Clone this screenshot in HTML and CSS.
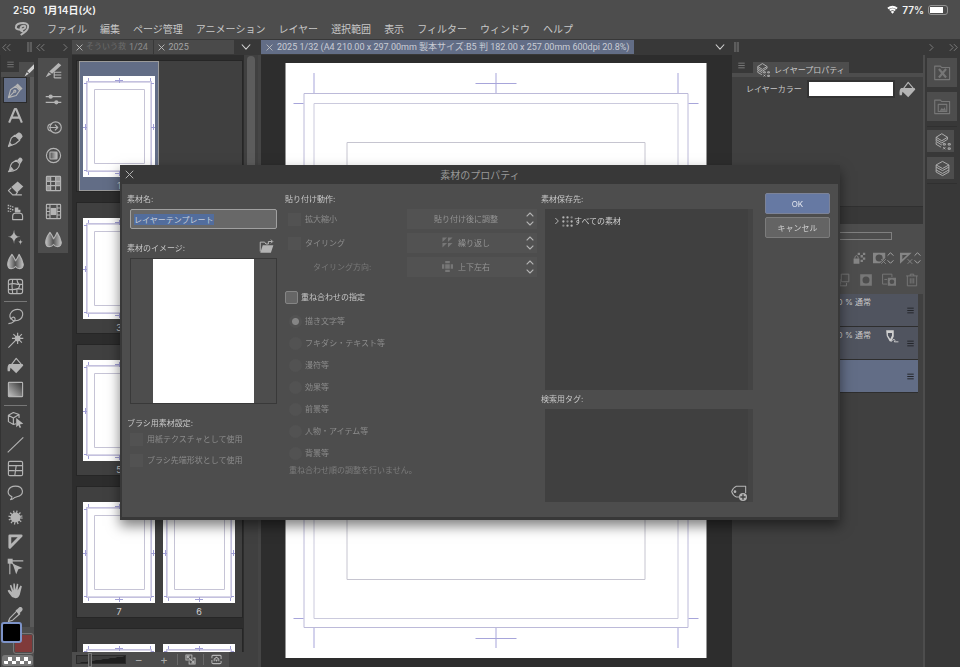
FILE: index.html
```html
<!DOCTYPE html>
<html lang="ja">
<head>
<meta charset="utf-8">
<meta name="viewport" content="width=device-width, initial-scale=1">
<title>素材のプロパティ</title>
<link rel="stylesheet" href="styles.css">
</head>
<body>
<svg class="sprite" aria-hidden="true">
  <defs>
    <linearGradient id="fade" x1="0" y1="0" x2="1" y2="0"><stop offset="0" stop-color="#c4c4c4"/><stop offset="1" stop-color="#505050"/></linearGradient>
    <linearGradient id="fadeback" x1="0" y1="0" x2="1" y2="0"><stop offset="0" stop-color="#505050"/><stop offset="1" stop-color="#c4c4c4"/></linearGradient>
    <linearGradient id="fadediag" x1="0" y1="1" x2="1" y2="0"><stop offset="0" stop-color="#c4c4c4"/><stop offset="1" stop-color="#333"/></linearGradient>
  </defs>
  <symbol id="i-logo" viewBox="0 0 24 24"><path class="ln thick" d="M9 13c-5 0-7-2-6-5 1-4 6-5 11-5 6 0 8 3 7 7-1 5-6 8-11 11M9 13c4 0 8-2 8-4 0-3-6-2-7 1-1 4 1 6 4 5"/></symbol>
  <symbol id="i-pen" viewBox="0 0 24 24"><path class="ln" d="M2 22 5 11l7-5 6 6-5 7zM2 22l8-8"/><circle class="ln" cx="11" cy="13" r="1.500"/><path class="fl" d="m12 5 3-3 7 7-3 3z"/></symbol>
  <symbol id="i-text" viewBox="0 0 24 24"><path class="ln thick" d="M3 22 11 3h2l8 19M6 15h12"/></symbol>
  <symbol id="i-pencil" viewBox="0 0 24 24"><path class="ln" d="M2 22 6 10l5-4 7 7-6 5z"/><path class="fl" d="m2 22 2-6 4 4zM11 6l5-4c3 0 6 3 6 6l-4 5z"/></symbol>
  <symbol id="i-brush" viewBox="0 0 24 24"><path class="ln" d="M2 22c4-3 1-8 5-12l6-4 5 5c-1 9-8 11-16 11z"/><path class="fl" d="m14 6 4-4c3 0 4 2 4 4l-3 5zM2 22l4-7 4 5z"/></symbol>
  <symbol id="i-eraser" viewBox="0 0 24 24"><path class="fl" d="m6 10 9-8 8 7-9 9z"/><path class="ln" d="m6 11-4 4 6 6h4l3-4M8 21h13"/></symbol>
  <symbol id="i-spray" viewBox="0 0 24 24"><path class="dots" d="M2 1v11M5 2v9M8 3v7"/><path class="fl" d="M11 5h5v3h3v4h-8z"/><path class="ln" d="M8 22v-5q0-4 4-4h6q4 0 4 4v5z"/></symbol>
  <symbol id="i-spark" viewBox="0 0 24 24"><path class="fl" d="M10 1q0 10 9 10-9 0-9 10-1-10-9-10 8 0 9-10zM19 14q0 4 4 4-4 0-4 5 0-5-4-5 4 0 4-4z"/></symbol>
  <symbol id="i-blend" viewBox="0 0 24 24"><path fill="url(#fade)" d="M7 2q3 4 5 9l-1 9q-2 2-5 2-5 0-5-6T7 2z"/><path fill="url(#fadeback)" d="M17 2q5 8 6 14 0 6-5 6-4 0-6-3l-1-6q3-5 6-11z"/><path class="ln" d="M7 2q3 4 5 9 3-4 5-9 5 8 6 14 0 6-5 6-4 0-6-3-2 3-6 3-5 0-5-6T7 2z"/></symbol>
  <symbol id="i-warp" viewBox="0 0 24 24"><rect class="ln" x="2" y="2" width="20" height="20" rx="3"/><path class="ln" d="M8 2q-2 10 0 20M2 9q8-2 13 0h7M2 16q8 1 13-1l7 1M14 2q0 4 4 8-1 5-4 6v6"/></symbol>
  <symbol id="i-lasso" viewBox="0 0 24 24"><path class="ln" d="M6 16C1 10 7 2 15 2c11 0 9 15-3 16-5 1-7-4-4-5s5 3 2 6-6 3-8 3"/></symbol>
  <symbol id="i-wand" viewBox="0 0 24 24"><path class="ln" d="m2 22 9-9M15 1v16M7 9h16M9 3l12 12M21 3 9 15"/><circle class="fl" cx="15" cy="9" r="4"/></symbol>
  <symbol id="i-bucket" viewBox="0 0 24 24"><path class="ln" d="M6 11 13 2l7 8"/><path class="fl" d="M3 10h19l1 2-10 11-8-8-1 5H1q-1-8 2-10z"/></symbol>
  <symbol id="i-gradient" viewBox="0 0 24 24"><rect class="ln" x="2" y="2" width="20" height="20" rx="1" style="fill:url(#fadediag)"/></symbol>
  <symbol id="i-object" viewBox="0 0 24 24"><path class="ln" d="m9 2 8 3v5M9 2 2 6v9l7 4 4-1M2 6l7 4 8-5M9 10v9"/><path class="fl" d="m13 10 10 8-5 1 2 4-2 1-2-4-3 3z"/></symbol>
  <symbol id="i-line" viewBox="0 0 24 24"><path class="ln" d="M1 23 23 2"/></symbol>
  <symbol id="i-frame" viewBox="0 0 24 24"><rect class="ln" x="2" y="2" width="20" height="20" rx="2"/><path class="ln" d="M2 8h20M2 15h9M13 8l-2 14M12 15h10"/></symbol>
  <symbol id="i-balloon" viewBox="0 0 24 24"><path class="ln" d="M7 18C-2 14 1 3 12 3s14 12 2 15l-3 1q-3 3-6 3 2-2 2-4z"/></symbol>
  <symbol id="i-burst" viewBox="0 0 24 24"><circle class="fl" cx="12" cy="12" r="7"/><circle class="ln" cx="12" cy="12" r="8" stroke-dasharray="1.600 2.600" style="stroke-width:4"/></symbol>
  <symbol id="i-ruler" viewBox="0 0 24 24"><path class="ln heavy" d="M4 4h16L4 20z"/></symbol>
  <symbol id="i-node" viewBox="0 0 24 24"><path class="ln" d="M4 4h19M4 4v19M4 4l9 9"/><rect class="fl" x="1" y="1" width="7" height="7"/><path class="fl" d="m8 8 14 6-6 2-3 7z"/></symbol>
  <symbol id="i-hand" viewBox="0 0 24 24"><path class="fl" d="M7 21C5 18 1 14 1 12l2-1 4 3L4 5l2-1 3 8V2h2l1 9 2-9 2 1-1 9 4-7 2 1-3 12q-2 5-6 5z"/></symbol>
  <symbol id="i-dropper" viewBox="0 0 24 24"><path class="ln" d="m2 22 2-5L14 7l4 4L8 20z"/><path class="fl" d="m12 6 2-1 3-3c3-2 7 2 4 5l-3 3-1 3z"/></symbol>
  <symbol id="i-stroke" viewBox="0 0 24 24"><path class="fl" d="M19 0 23 4 10 17l-4-4zM5 15l4 3-8 5z"/></symbol>
  <symbol id="i-subtool" viewBox="0 0 24 24"><path class="fl" d="M19 0 23 3 10 15l-4-3zM5 13l4 3-8 4z"/><path class="ln" d="M13 12v9M13 13h10M13 17h10M13 21h10"/></symbol>
  <symbol id="i-sliders" viewBox="0 0 24 24"><path class="ln" d="M1 8h22M1 16h22"/><circle class="fl" cx="8" cy="8" r="3"/><circle class="fl" cx="16" cy="16" r="3"/></symbol>
  <symbol id="i-size" viewBox="0 0 24 24"><circle class="ln" cx="15" cy="12" r="8"/><path class="ln" d="M9 7a5 5 0 1 0 0 10M6 12h12M14 8l4 4-4 4"/></symbol>
  <symbol id="i-color" viewBox="0 0 24 24"><circle class="ln" cx="12" cy="12" r="10"/><rect class="ln" x="7" y="7" width="10" height="10" rx="1" style="fill:url(#fadeback)"/></symbol>
  <symbol id="i-grid" viewBox="0 0 24 24"><rect class="ln" x="2" y="2" width="20" height="20" rx="1"/><path class="ln" d="M8 2v20M15 2v20M2 9h20M2 15h20"/><path class="fl" d="M2 2h6v7H2zM15 2h7v7h-7zM2 15h6v7H2zM15 9h7v6h-7z" opacity=".7"/></symbol>
  <symbol id="i-film" viewBox="0 0 24 24"><rect class="ln" x="2" y="2" width="20" height="20" rx="1"/><path class="ln" d="M7 2v20M17 2v20M2 7h5M2 12h5M2 17h5M17 7h5M17 12h5M17 17h5"/><rect class="fl" x="8" y="7" width="8" height="10"/></symbol>
  <symbol id="i-chev" viewBox="0 0 24 24"><path class="ln" d="m2 6 10 11L22 6"/></symbol>
  <symbol id="i-right" viewBox="0 0 24 24"><path class="ln" d="m7 3 9 9-9 9"/></symbol>
  <symbol id="i-dleft" viewBox="0 0 24 24"><path class="ln" d="m11 3-9 9 9 9M22 3l-9 9 9 9"/></symbol>
  <symbol id="i-dright" viewBox="0 0 24 24"><path class="ln" d="m2 3 9 9-9 9M13 3l9 9-9 9"/></symbol>
  <symbol id="i-close" viewBox="0 0 24 24"><path class="ln" d="m2 2 20 20M22 2 2 22"/></symbol>
  <symbol id="i-menu" viewBox="0 0 24 24"><path class="ln" d="M1 4h22M1 12h22M1 20h22"/></symbol>
  <symbol id="i-updown" viewBox="0 0 12 20"><path class="ln" d="m1 6 5-5 5 5M1 14l5 5 5-5"/></symbol>
  <symbol id="i-layers" viewBox="0 0 24 24"><path class="ln" d="m12 2 9 5v3l-9 5-9-5V7zM3 10v4l9 5 9-5v-4M3 14v3l9 5 9-5v-3M3 7l9 5 9-5"/></symbol>
  <symbol id="i-layerprop" viewBox="0 0 24 24"><path class="ln" d="m11 1 8 5v3l-8 5-8-5V6zM3 9v3l8 5M3 13v3l7 4M3 6l8 5 8-5"/><path class="ln" d="M13 15h3v2h-3zM20 15h3v2h-3zM13 20l3 3M16 20l-3 3M20 21h3v2h-3z"/></symbol>
  <symbol id="i-matx" viewBox="0 0 24 24"><path class="ln" d="M1 3h8l2 2h11v17H1z"/><path class="ln thick" d="m7 7 10 12M17 7 7 19"/></symbol>
  <symbol id="i-mat" viewBox="0 0 24 24"><path class="ln" d="M1 3h8l2 2h11v17H1zM6 9h12v10H6z"/><path class="fl" d="m8 18 3-4 2 2 2-3 2 5z"/></symbol>
  <symbol id="i-folder" viewBox="0 0 24 24"><path class="ln" d="M2 20V5h7l2 3h4M15 8V4h6M19 1l3 3-3 3"/><path class="fl" d="m6 10h17l-4 12H2z"/></symbol>
  <symbol id="i-alltags" viewBox="0 0 24 24"><g class="fl"><circle cx="3" cy="3" r="2.500"/><circle cx="12" cy="3" r="2.500"/><circle cx="21" cy="3" r="2.500" opacity=".6"/><circle cx="3" cy="12" r="2.500"/><circle cx="12" cy="12" r="2.500" opacity=".6"/><circle cx="21" cy="12" r="2.500"/><circle cx="3" cy="21" r="2.500" opacity=".6"/><circle cx="12" cy="21" r="2.500"/><circle cx="21" cy="21" r="2.500"/></g></symbol>
  <symbol id="i-tagadd" viewBox="0 0 24 24"><path class="ln" d="M12 18H8Q3 16 1 10 3 4 8 2h14v10"/><circle class="fl" cx="6" cy="10" r="2"/><circle class="fl" cx="18" cy="18" r="6"/><path d="M18 14v8M14 18h8" stroke="#404040" stroke-width="2"/></symbol>
  <symbol id="i-tile" viewBox="0 0 24 24"><path class="fl" d="M1 1h10L1 11zM13 1h10L13 11zM1 13h10L1 23zM13 13h10L13 23z"/></symbol>
  <symbol id="i-cross" viewBox="0 0 24 24"><path class="fl" d="M7 7h10v10H7zM7 0h10v5H7zM7 19h10v5H7zM0 7h5v10H0zM19 7h5v10h-5z"/></symbol>
  <symbol id="i-lock" viewBox="0 0 24 24"><path class="fl" d="M1 13h10v9H1zM8 3h4v4H8zM17 3h4v4h-4zM13 7h4v4h-4zM17 11h4v4h-4zM13 15h4v4h-4z"/><path class="ln" d="M3 13q0-5 3-5t3 5"/></symbol>
  <symbol id="i-maskx" viewBox="0 0 24 24"><path class="fl" fill-rule="evenodd" d="M0 3h21v9l-9 9H0zM10 6a6 6 0 1 0 1 12 6 6 0 0 0-1-12z"/><path class="ln" d="m14 14 8 8M22 14l-8 8"/></symbol>
  <symbol id="i-rulerx" viewBox="0 0 24 24"><path class="fl" fill-rule="evenodd" d="M0 3h20L0 22zM4 7v7l8-7z"/><path class="ln" d="m13 14 8 8M21 14l-8 8"/></symbol>
  <symbol id="i-merge" viewBox="0 0 24 24"><path class="ln" d="M9 2h13v13H9zM1 11h6v11h11v-5M4 14l5 4"/></symbol>
  <symbol id="i-mask" viewBox="0 0 24 24"><path class="fl" fill-rule="evenodd" d="M2 2h20v20H2zM12 6a6 6 0 1 0 0 12 6 6 0 0 0 0-12z"/></symbol>
  <symbol id="i-maskcopy" viewBox="0 0 24 24"><path class="ln" d="M17 7V2H1v17h8M4 11h5"/><path class="fl" fill-rule="evenodd" d="M10 8h14v14H10zM17 11a4 4 0 1 0 0 8 4 4 0 0 0 0-8z"/></symbol>
  <symbol id="i-trash" viewBox="0 0 24 24"><path class="ln" d="M2 5h20M9 5V2h6v3M4 5v17h16V5M9 9v9M12 9v9M15 9v9"/></symbol>
  <symbol id="i-draft" viewBox="0 0 24 24"><path class="fl" fill-rule="evenodd" d="M2 2h13v11l-4 8H8l-5-9zM5 7v4l4 6 3-6V7z"/><path class="ln" d="M10 22q4-5 6-4t0 4h7"/></symbol>
  <symbol id="i-fit" viewBox="0 0 24 24"><path class="ln" d="M2 2h13v11H2zM9 16v6h13V9h-4M5 5l14 14M5 10V5h5M14 19h5v-5"/></symbol>
  <symbol id="i-rotate" viewBox="0 0 24 24"><path class="ln" d="M2 9V5q0-2 3-2h14q3 0 3 2v6M22 15v4q0 2-3 2H5q-3 0-3-2v-6M7 16v-5l5-4 5 4v5M10 12l2 3 2-3"/></symbol>
  <symbol id="i-wifi" viewBox="0 0 24 18"><path class="ln heavy" d="M2 7q10-8 20 0M6 11q6-5 12 0"/><path class="fl" d="m8 14q4-3 8 0l-4 4z"/></symbol>
  <symbol id="thumb" viewBox="0 0 72 101">
    <path fill="#fff" d="M0 0h72v101H0z"/>
    <path fill="none" stroke="#d9d7e8" stroke-width="2" d="M4 6h64v89H4z"/>
    <path fill="none" stroke="#b5b2d8" d="M3.500 5.500h65v90h-65z" opacity=".6"/>
    <path fill="none" stroke="#c6c4d6" d="M11.500 13.500h50v74h-50z"/>
    <path fill="none" stroke="#a19fd6" d="M32 4.500h8M36.500 2v5M32 97.500h8M36.500 95v5M2.500 48v6M0 51.500h4M70.500 48v6M68 51.500h4M5.500 2v3M67.500 2v3M5.500 96v3M67.500 96v3M1 7.500h3M68 7.500h3M1 94.500h3M68 94.500h3"/>
  </symbol>
</svg>

<div class="app">
  <header>
    <div class="status"><span>2:50</span><span>1月14日(火)</span><span class="right"><svg class="wifi"><use href="#i-wifi"/></svg>77%<i class="battery"></i></span></div>
    <nav class="menubar" aria-label="メインメニュー">
      <svg class="logo"><use href="#i-logo"/></svg>
      <a href="#">ファイル</a><a href="#">編集</a><a href="#">ページ管理</a><a href="#">アニメーション</a><a href="#">レイヤー</a><a href="#">選択範囲</a><a href="#">表示</a><a href="#">フィルター</a><a href="#">ウィンドウ</a><a href="#">ヘルプ</a>
    </nav>
  </header>

  <div class="strip">
    <div class="seg"><svg class="s10"><use href="#i-dleft"/></svg><i class="grip"></i></div>
    <div class="seg"><svg class="s10"><use href="#i-dleft"/></svg><svg class="s10"><use href="#i-right"/></svg></div>
    <div class="seg tabs">
      <button class="tab dim"><svg class="s7"><use href="#i-close"/></svg><span>そういう救</span> 1/24</button>
      <button class="tab"><svg class="s7"><use href="#i-close"/></svg>2025</button>
      <svg class="s10 bright"><use href="#i-chev"/></svg>
    </div>
    <div class="seg doc">
      <button class="tab current"><svg class="s7"><use href="#i-close"/></svg>2025 1/32 (A4 210.00 x 297.00mm 製本サイズ:B5 判 182.00 x 257.00mm 600dpi 20.8%)</button>
      <svg class="s10 bright"><use href="#i-chev"/></svg>
    </div>
    <div class="seg"><i class="grip"></i></div>
    <div class="seg"><svg class="s10"><use href="#i-right"/></svg><svg class="s10"><use href="#i-dright"/></svg></div>
  </div>

  <main class="workspace">
    <aside class="tools" aria-label="ツール">
      <div class="palette-head"><span class="menu-tab"><svg><use href="#i-menu"/></svg></span><span class="pen-tab"><svg><use href="#i-stroke"/></svg></span></div>
      <div class="tool-list">
        <button class="on" aria-label="ペン"><svg><use href="#i-pen"/></svg></button>
        <button aria-label="テキスト"><svg><use href="#i-text"/></svg></button>
        <button aria-label="鉛筆"><svg><use href="#i-pencil"/></svg></button>
        <button aria-label="筆"><svg><use href="#i-brush"/></svg></button>
        <button aria-label="消しゴム"><svg><use href="#i-eraser"/></svg></button>
        <button aria-label="エアブラシ"><svg><use href="#i-spray"/></svg></button>
        <button aria-label="デコレーション"><svg><use href="#i-spark"/></svg></button>
        <button aria-label="色混ぜ"><svg><use href="#i-blend"/></svg></button>
        <button aria-label="ゆがみ"><svg><use href="#i-warp"/></svg></button>
        <hr>
        <button aria-label="選択範囲"><svg><use href="#i-lasso"/></svg></button>
        <button aria-label="自動選択"><svg><use href="#i-wand"/></svg></button>
        <button aria-label="塗りつぶし"><svg><use href="#i-bucket"/></svg></button>
        <button aria-label="グラデーション"><svg><use href="#i-gradient"/></svg></button>
        <hr>
        <button aria-label="操作"><svg><use href="#i-object"/></svg></button>
        <button aria-label="図形"><svg><use href="#i-line"/></svg></button>
        <button aria-label="コマ枠"><svg><use href="#i-frame"/></svg></button>
        <button aria-label="フキダシ"><svg><use href="#i-balloon"/></svg></button>
        <button aria-label="フラッシュ"><svg><use href="#i-burst"/></svg></button>
        <button aria-label="定規"><svg><use href="#i-ruler"/></svg></button>
        <button aria-label="線修正"><svg><use href="#i-node"/></svg></button>
        <button aria-label="移動"><svg><use href="#i-hand"/></svg></button>
        <button aria-label="スポイト"><svg><use href="#i-dropper"/></svg></button>
      </div>
      <div class="swatches">
        <button class="sw sub" aria-label="サブカラー"></button>
        <button class="sw primary" aria-label="メインカラー"></button>
        <button class="clear" aria-label="透明色"></button>
      </div>
    </aside>

    <aside class="quick" aria-label="パレット">
      <div class="quick-list">
        <button aria-label="サブツール"><svg><use href="#i-subtool"/></svg></button>
        <button aria-label="ツールプロパティ"><svg><use href="#i-sliders"/></svg></button>
        <button aria-label="ブラシサイズ"><svg><use href="#i-size"/></svg></button>
        <button aria-label="カラーサークル"><svg><use href="#i-color"/></svg></button>
        <button aria-label="カラーセット"><svg><use href="#i-grid"/></svg></button>
        <button aria-label="タイムライン"><svg><use href="#i-film"/></svg></button>
        <button aria-label="混色"><svg><use href="#i-blend"/></svg></button>
      </div>
    </aside>

    <section class="pages" aria-label="ページ管理">
      <div class="page-scroll">
        <div class="spreads">
          <div class="spread"><figure class="picked"><svg><use href="#thumb"/></svg><figcaption>1</figcaption></figure></div>
          <div class="spread"><figure><svg><use href="#thumb"/></svg><figcaption>3</figcaption></figure><figure><svg><use href="#thumb"/></svg><figcaption>2</figcaption></figure></div>
          <div class="spread"><figure><svg><use href="#thumb"/></svg><figcaption>5</figcaption></figure><figure><svg><use href="#thumb"/></svg><figcaption>4</figcaption></figure></div>
          <div class="spread"><figure><svg><use href="#thumb"/></svg><figcaption>7</figcaption></figure><figure><svg><use href="#thumb"/></svg><figcaption>6</figcaption></figure></div>
          <div class="spread"><figure><svg><use href="#thumb"/></svg></figure><figure><svg><use href="#thumb"/></svg></figure></div>
        </div>
        <div class="scrollbar"><i></i></div>
      </div>
      <div class="page-foot"><div class="page-bar">
        <input type="range" min="0" max="100" value="24" aria-label="表示サイズ">
        <button aria-label="縮小">−</button><button aria-label="拡大">+</button>
        <button class="sep" aria-label="全体表示"><svg><use href="#i-fit"/></svg></button><button class="sep" aria-label="回転"><svg><use href="#i-rotate"/></svg></button>
      </div></div>
    </section>

    <section class="canvas" aria-label="キャンバス">
      <svg viewBox="0 0 421 595">
        <path fill="#fff" d="M0 0h421v595H0z"/>
        <g fill="none">
          <path stroke="#bcbad9" d="M18.500 30.500h384v534h-384z"/>
          <path stroke="#cbcadd" d="M28.500 40.500h364v515h-364z"/>
          <path stroke="#c6c5d0" d="M61.500 79.500h298v437h-298z"/>
          <path stroke="#a7a5da" d="M28.500 10v20M392.500 10v20M8 40.500h10M403 40.500h10M28.500 565v20M392.500 565v20M8 555.500h10M403 555.500h10M210.500 10v20M190 20.500h41M210.500 565v20M190 575.500h41"/>
        </g>
      </svg>
    </section>

    <aside class="panels">
      <section class="props">
        <div class="panel-head"><svg class="mini"><use href="#i-menu"/></svg><h2><svg><use href="#i-layerprop"/></svg>レイヤープロパティ</h2></div>
        <div class="color-row"><span>レイヤーカラー</span><button class="layer-color" aria-label="レイヤーカラー"></button><svg><use href="#i-bucket"/></svg></div>
      </section>
      <section class="layers" aria-label="レイヤー">
        <div class="layer-tools">
          <div class="opacity"></div>
          <div class="icons"><svg><use href="#i-lock"/></svg><span><svg><use href="#i-maskx"/></svg><svg class="ud"><use href="#i-updown"/></svg></span><span><svg><use href="#i-rulerx"/></svg><svg class="ud"><use href="#i-updown"/></svg></span></div>
          <div class="icons row2"><svg><use href="#i-merge"/></svg><svg><use href="#i-mask"/></svg><svg><use href="#i-maskcopy"/></svg><svg><use href="#i-trash"/></svg></div>
        </div>
        <ul>
          <li><span>100 % 通常</span><svg class="mini"><use href="#i-menu"/></svg></li>
          <li><span>100 % 通常</span><svg class="draft"><use href="#i-draft"/></svg><svg class="mini"><use href="#i-menu"/></svg></li>
          <li class="active"><span></span><svg class="mini"><use href="#i-menu"/></svg></li>
        </ul>
      </section>
    </aside>

    <aside class="dock" aria-label="素材">
      <button aria-label="素材一覧"><svg><use href="#i-matx"/></svg></button>
      <button aria-label="画像素材"><svg><use href="#i-mat"/></svg></button>
      <div class="dock-group">
        <button aria-label="レイヤープロパティ"><svg><use href="#i-layerprop"/></svg></button>
        <button aria-label="レイヤー"><svg><use href="#i-layers"/></svg></button>
      </div>
    </aside>
  </main>
</div>

<div class="overlay">
  <div class="dialog" role="dialog" aria-labelledby="dialog-title">
    <div class="titlebar"><button aria-label="閉じる"><svg><use href="#i-close"/></svg></button><h1 id="dialog-title">素材のプロパティ</h1></div>
    <form class="dialog-body">
      <div class="col material">
        <label class="caption" for="material-name">素材名:</label>
        <input id="material-name" type="text" value="レイヤーテンプレート">
        <div class="caption with-icon"><span>素材のイメージ:</span><button type="button" aria-label="画像を開く"><svg><use href="#i-folder"/></svg></button></div>
        <div class="preview"><div class="sheet"></div></div>
        <div class="caption spaced">ブラシ用素材設定:</div>
        <label class="check"><input type="checkbox" disabled>用紙テクスチャとして使用</label>
        <label class="check second"><input type="checkbox" disabled>ブラシ先端形状として使用</label>
      </div>

      <div class="col paste">
        <div class="caption">貼り付け動作:</div>
        <div class="option"><label class="check"><input type="checkbox" disabled>拡大縮小</label>
          <div class="pick"><select disabled aria-label="拡大縮小"><option>貼り付け後に調整</option></select><svg class="ud"><use href="#i-updown"/></svg></div></div>
        <div class="option"><label class="check"><input type="checkbox" disabled>タイリング</label>
          <div class="pick iconed"><select disabled aria-label="タイリング"><option>繰り返し</option></select><svg class="pre"><use href="#i-tile"/></svg><svg class="ud"><use href="#i-updown"/></svg></div></div>
        <div class="option"><label class="indent" for="direction">タイリング方向:</label>
          <div class="pick iconed"><select id="direction" disabled><option>上下左右</option></select><svg class="pre"><use href="#i-cross"/></svg><svg class="ud"><use href="#i-updown"/></svg></div></div>
        <label class="order"><input type="checkbox">重ね合わせの指定</label>
        <div class="radios">
          <label><input type="radio" name="order" disabled checked>描き文字等</label>
          <label><input type="radio" name="order" disabled>フキダシ・テキスト等</label>
          <label><input type="radio" name="order" disabled>漫符等</label>
          <label><input type="radio" name="order" disabled>効果等</label>
          <label><input type="radio" name="order" disabled>前景等</label>
          <label><input type="radio" name="order" disabled>人物・アイテム等</label>
          <label><input type="radio" name="order" disabled>背景等</label>
        </div>
        <p class="note">重ね合わせ順の調整を行いません。</p>
      </div>

      <div class="col save">
        <div class="caption">素材保存先:</div>
        <div class="well tree"><button type="button" aria-expanded="false"><svg class="s7"><use href="#i-right"/></svg><svg class="dotsicon"><use href="#i-alltags"/></svg>すべての素材</button></div>
        <div class="caption tagcap">検索用タグ:</div>
        <div class="well tagbox"><button type="button" aria-label="タグを追加"><svg><use href="#i-tagadd"/></svg></button></div>
      </div>

      <div class="col actions">
        <button type="submit" class="ok">OK</button>
        <button type="button">キャンセル</button>
      </div>
    </form>
  </div>
</div>
<script src="script.js"></script>
</body>
</html>
```
FILE: styles.css
```css
* { box-sizing: border-box; }

:root {
  --bar: #4d4d4d;
  --dark: #383838;
  --panel: #404040;
  --deep: #2d2d2d;
  --text: #c8c8c8;
  --dim: #8c8c8c;
  --blue: #626d86;
}

body {
  margin: 0;
  background: var(--deep);
  color: var(--text);
  font: 8px/12px Inter, "Noto Sans CJK JP", sans-serif;
  overflow: hidden;
}

button {
  padding: 0;
  border: 0;
  background: none;
  color: inherit;
  font: inherit;
}

h1, h2, p, ul, figure { margin: 0; padding: 0; font-weight: 400; }
a { color: inherit; text-decoration: none; }
svg { display: block; flex: none; color: #b4b4b4; }
.sprite { position: absolute; width: 0; height: 0; }

.ln { fill: none; stroke: currentColor; stroke-width: var(--stroke, 1.6); stroke-linejoin: round; }
.thick { stroke-width: 3; }
.heavy { stroke-width: 4; }
.fl { fill: currentColor; }
.dots { fill: none; stroke: currentColor; stroke-width: 2; stroke-dasharray: 2 2; }

.app { display: flex; flex-direction: column; height: 100vh; }

/* Status and menus */
header { background: var(--bar); }
.status {
  display: flex;
  gap: 8px;
  align-items: center;
  height: 19px;
  padding: 0 12px 0 13px;
  color: #f4f4f4;
  font-size: 10px;
  font-weight: 600;
}
.status .right { display: flex; align-items: center; gap: 4px; margin-left: auto; }
.wifi { width: 11px; height: 9px; color: #fff; }
.battery {
  width: 20px;
  height: 10px;
  border: 1px solid #929292;
  border-radius: 3px;
  background: linear-gradient(#fff, #fff) 1px 1px / 13px 6px no-repeat;
}
.menubar {
  display: flex;
  gap: 13px;
  align-items: center;
  height: 20px;
  padding-left: 14px;
  font-size: 10px;
  white-space: nowrap;
}
.logo { width: 16px; height: 16px; margin-right: 4px; }

/* Tab strip */
.strip, .workspace {
  display: grid;
  grid-template-columns: 34px 38px 189px minmax(0, 1fr) 193px 35px;
}
.strip { height: 16px; background: var(--dark); font: 9px/14px Roboto, "Noto Sans CJK JP", sans-serif; --stroke: 2.6; }
.seg { display: flex; align-items: center; justify-content: space-between; padding: 0 2px; min-width: 0; }
.seg svg { color: #7c7c7c; }
.s10 { width: 9px; height: 9px; }
.s7 { width: 7px; height: 7px; --stroke: 3; }
.seg .bright { width: 10px; height: 10px; margin-right: 7px; color: #d0d0d0; }
.grip { width: 5px; height: 10px; border: solid #5c5c5c; border-width: 0 2px; background: #484848; }
.seg.tabs { padding: 0 2px 0 0; gap: 1px; }
.seg.doc { padding: 0; }
.tab {
  display: flex;
  align-items: center;
  gap: 4px;
  height: 14px;
  padding: 0 5px;
  background: #4a4a4a;
  color: #a4a4a4;
  white-space: nowrap;
}
.tab svg { color: #c0c0c0; }
.tabs .tab { flex: 1; min-width: 0; padding: 0 0 0 4px; }
.tabs .bright { margin: 0 8px 0 6px; }
.tabs .dim { gap: 3px; color: #8b8b8b; }
.dim span { color: #6c6c6c; font-size: 8px; }
.tab.current { background: var(--blue); color: #c9ccd4; }

/* Tool palette */
.workspace { flex: 1; min-height: 0; }
.tools { display: flex; flex-direction: column; min-height: 0; background: var(--panel); border-left: 1px solid #333; }
.palette-head { display: flex; height: 22px; background: var(--bar); }
.menu-tab { width: 18px; height: 17px; padding: 6px; background: var(--dark); }
.menu-tab svg { width: 7px; height: 7px; color: #777; --stroke: 3; }
.pen-tab { flex: 1; border-top: 7px solid var(--dark); overflow: hidden; }
.pen-tab svg { width: 13px; height: 13px; margin: 2px 0 0 5px; color: #d0d0d0; }
.tool-list { display: flex; flex: 1; flex-direction: column; min-height: 0; padding-right: 5px; border-right: 4px solid #5a5a5a; }
.tool-list button { display: grid; flex: 1; place-items: center; min-height: 0; width: 24px; margin-left: 2px; }
.tool-list .on { background: var(--blue); border: 1px solid #2a2a2a; }
.tool-list svg { width: 17px; height: 17px; }
.tool-list hr { width: 23px; height: 1px; margin: 3px 0 2px 3px; border: 0; background: #777; }
.swatches { position: relative; height: 40px; background: var(--bar); }
.sw { position: absolute; width: 21px; height: 21px; border-radius: 3px; }
.primary { left: 0; top: -5px; border: 2px solid #7d93c8; background: #000; }
.sub { left: 12px; top: 6px; border: 1px solid #777; background: #803a3a; box-shadow: inset 0 0 0 1px #4d4d4d; }
.clear {
  position: absolute;
  left: 1px;
  right: 1px;
  bottom: 1px;
  height: 11px;
  border: 2px solid #777;
  border-radius: 3px;
  background: repeating-conic-gradient(#fff 0 25%, #777 0 50%) 0 0 / 8px 8px;
}

.quick { padding: 3px 4px; background: var(--dark); }
.quick-list { display: flex; flex-direction: column; background: var(--bar); height: 195px; }
.quick-list button { display: grid; flex: 1; place-items: center; }
.quick-list svg { width: 17px; height: 17px; }

/* Page manager */
.pages { display: flex; flex-direction: column; min-height: 0; background: var(--deep); border-right: 3px solid #454545; }
.page-scroll { display: flex; flex: 1; min-height: 0; overflow: hidden; }
.spreads { display: flex; flex: 1; flex-direction: column; gap: 10px; padding: 5px 1px 0 4px; }
.spread { display: flex; flex: none; height: 132px; background: var(--panel); border: 1px solid #262626; padding: 0 2px; }
.spread figure { width: 80px; height: 130px; padding: 15px 4px 0; text-align: center; color: #d0d0d0; font-size: 9px; }
.spread .picked { background: var(--blue); border: 1px solid #9a9a9a; padding: 14px 3px 0; }
.spread figure svg { width: 72px; height: 101px; margin-bottom: 3px; }
.scrollbar { width: 14px; padding: 1px 3px; background: var(--panel); }
.scrollbar i { display: block; height: 60%; border-radius: 4px; background: #5c5c5c; }
.page-foot { background: var(--panel); }
.page-bar { display: flex; align-items: center; height: 15px; width: 157px; padding-left: 4px; background: var(--bar); color: #a8a8a8; font-size: 12px; }
.page-bar button { display: grid; flex: 1; place-items: center; height: 11px; }
.page-bar .sep { border-left: 1px solid #686868; }
.page-bar svg { width: 11px; height: 11px; --stroke: 2.2; }
.page-bar input {
  appearance: none;
  width: 50px;
  height: 9px;
  margin: 0;
  border: 1px solid #2b2b2b;
  background: linear-gradient(172deg, #3d3d3d 50%, #1f1f1f 52%);
}
.page-bar input::-webkit-slider-thumb { appearance: none; width: 4px; height: 14px; border: 1px solid #777; background: #4a4a4a; }

/* Canvas */
.canvas { min-height: 0; padding: 8px 25px 9px 24px; background: var(--deep); }
.canvas svg { width: 100%; height: 100%; }

/* Right panels */
.panels { background: var(--panel); border-right: 2px solid #4d4d4d; }
.props { height: 152px; border-bottom: 1px solid #303030; }
.panel-head { display: flex; height: 22px; gap: 8px; padding: 7px 0 0 6px; background: var(--dark); border-bottom: 4px solid var(--bar); }
.mini { width: 7px; height: 7px; color: #777; --stroke: 3.4; }
.panel-head h2 { display: flex; align-items: center; gap: 4px; height: 15px; padding: 0 4px 0 3px; background: var(--bar); font-size: 8px; }
.panel-head h2 svg { width: 14px; height: 14px; }
.color-row { display: flex; align-items: center; gap: 6px; padding: 0 0 0 14px; height: 24px; white-space: nowrap; }
.color-row span { width: 57px; }
.layer-color { width: 84px; height: 14px; background: #fff; outline: 2px solid #333; }
.color-row svg { width: 17px; height: 17px; }
.layers { padding-top: 17px; background: var(--dark); }
.layer-tools { height: 70px; padding: 8px 0 0; background: var(--bar); }
.opacity { width: 160px; height: 8px; border: 1px solid #808080; }
.icons { display: flex; justify-content: flex-end; align-items: center; gap: 6px; height: 20px; margin-top: 8px; padding-right: 2px; }
.icons svg { width: 14px; height: 14px; color: #858585; }
.icons span { display: flex; align-items: center; }
.icons .ud { width: 7px; height: 12px; color: #aaa; }
.icons.row2 { gap: 9px; margin-top: 2px; padding-right: 4px; }
.icons.row2 svg { width: 14px; height: 14px; color: #777; }
.layers ul { list-style: none; background: var(--panel); padding-right: 5px; }
.layers li { display: flex; align-items: center; height: 33px; padding-right: 4px; border-bottom: 1px solid #2e2e2e; background: #50545f; }
.layers li span { align-self: flex-start; width: 139px; padding-top: 2px; text-align: right; white-space: pre; }
.layers li .mini { margin-left: auto; color: #24262c; }
.layers .active { background: var(--blue); }
.draft { align-self: flex-start; width: 14px; height: 14px; margin: 2px 0 0 14px; color: #d0d0d0; }

.dock { display: flex; flex-direction: column; gap: 5px; padding: 3px 3px 0 2px; background: var(--dark); }
.dock button { display: grid; place-items: center; width: 100%; height: 29px; background: var(--bar); }
.dock svg { width: 17px; height: 17px; }
.dock > button svg { color: #777; }
.dock-group { display: grid; gap: 5px; padding: 3px 3px 4px 0; border: solid #303030; border-width: 1px 0; --stroke: 1.3; }
.dock-group button { height: 22px; padding-left: 4px; }

/* Dialog */
.overlay { position: fixed; inset: 0; display: flex; align-items: center; justify-content: center; padding-top: 18px; }
.dialog {
  width: 75%;
  min-width: 719px;
  border: solid #383838;
  border-width: 0 2px 3px;
  background: var(--bar);
  box-shadow: 0 6px 12px rgba(0, 0, 0, .5);
}
.titlebar { position: relative; display: flex; align-items: center; height: 19px; background: #383838; }
.titlebar h1 { flex: 1; color: #999; font-size: 10px; text-align: center; }
.titlebar button { position: absolute; left: 3px; --stroke: 2.6; }
.titlebar button svg { width: 9px; height: 9px; }
.dialog-body { display: grid; grid-template-columns: 154px 252px 212px 1fr; gap: 4px; padding: 9px 8px 15px 5px; }
.col { min-width: 0; white-space: nowrap; }
.caption { display: block; height: 12px; margin-bottom: 4px; }
.with-icon { display: flex; align-items: center; justify-content: space-between; margin-top: 13px; padding-right: 7px; }
.with-icon svg { width: 15px; height: 15px; margin-bottom: 3px; }
.material > input, .preview { display: block; width: 147px; margin-left: 3px; }
.material > input {
  height: 20px;
  padding: 0 3px;
  border: 1px solid #a0a0a0;
  border-radius: 2px;
  outline: 0;
  background: #686868;
  color: #c6cddb;
  font: inherit;
}
.material > input::selection { background: #526d9d; color: #c6cddb; }
.preview { height: 146px; padding: 0; border: 1px solid #393939; }
.sheet { width: 101px; height: 144px; margin: auto; background: #fff; }
.spaced { margin-top: 13px; }
.check { display: flex; align-items: center; gap: 4px; height: 12px; margin-left: 3px; color: var(--dim); }
.second { margin-top: 9px; }
input[type="checkbox"], input[type="radio"] { appearance: none; flex: none; width: 13px; height: 13px; margin: 0; background: #525252; }
input[type="radio"] { border-radius: 50%; }
input[type="radio"]:checked { background: radial-gradient(circle, #858585 3px, #525252 4px); }
.option { display: flex; align-items: center; justify-content: space-between; height: 20px; margin-bottom: 4px; }
.indent { margin-left: 28px; color: #787878; }
.pick { position: relative; width: 130px; height: 20px; }
.pick select {
  appearance: none;
  width: 100%;
  height: 100%;
  padding: 0 12px 0 0;
  border: 0;
  background: #525252;
  color: #949494;
  font: inherit;
  opacity: 1;
  text-align-last: center;
}
.pick.iconed select { padding: 0 0 0 4px; }
.pick .ud { position: absolute; right: 3px; top: 3px; width: 8px; height: 14px; }
.pick .pre { position: absolute; left: 35px; top: 4px; width: 11px; height: 11px; color: #777; }
.order { display: flex; align-items: center; gap: 3px; height: 14px; margin-top: 13px; }
.order input[type="checkbox"] { border: 1px solid #858585; border-radius: 2px; background: #666; }
.radios { margin-top: 6px; }
.radios label { display: flex; align-items: center; gap: 3px; height: 22px; margin-left: 4px; color: var(--dim); }
.note { margin-left: 4px; color: #7c7c7c; }
.well { margin-left: 4px; background: var(--panel); border-right: 5px solid #444; }
.tree { height: 181px; padding: 6px 8px; }
.tree button { display: flex; align-items: center; gap: 1px; color: #d0d0d0; }
.tree .s7 { width: 8px; height: 8px; }
.tree .dotsicon { width: 11px; height: 11px; }
.tagcap { margin-top: 3px; }
.tagbox { display: flex; align-items: flex-end; justify-content: flex-end; height: 93px; padding: 1px; }
.tagbox svg { width: 16px; height: 16px; }
.actions { display: grid; gap: 3px; align-content: start; padding-left: 8px; }
.actions button { height: 21px; border: 1px solid #7c7c7c; border-radius: 2px; background: #646464; color: #d0d0d0; }
.actions .ok { background: #6679a3; border-color: #7c8398; color: #e3e6ee; }
```
FILE: script.js
```js
const nameField = document.getElementById("material-name");
nameField.focus();
nameField.select();
```
